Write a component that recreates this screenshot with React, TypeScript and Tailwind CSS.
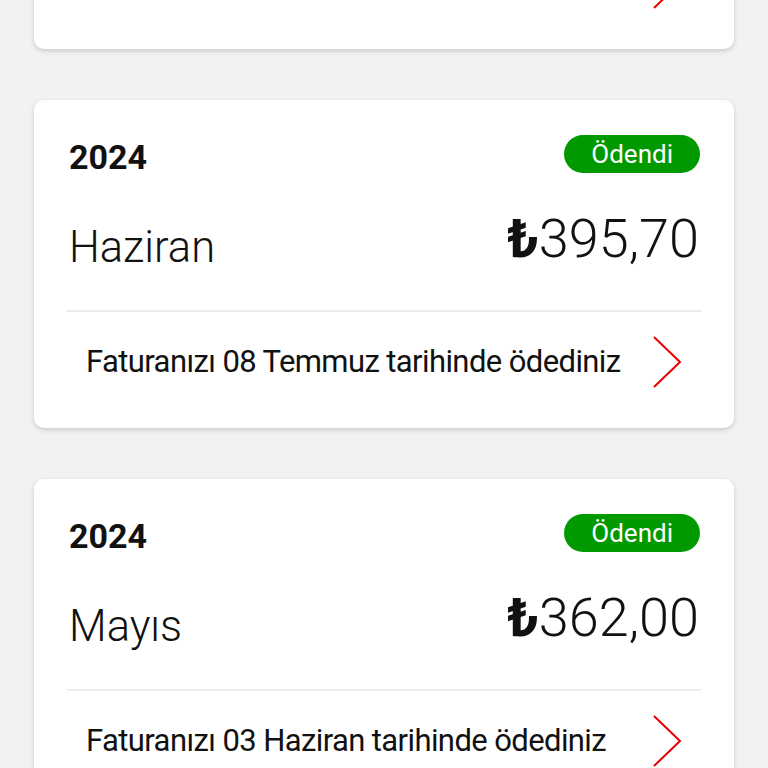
import React from "react";

type Bill = { year: string; month: string; amount: string; note: string };

const bills: Bill[] = [
  { year: "2024", month: "Temmuz", amount: "410,20", note: "Faturanızı 05 Ekim tarihinde ödediniz" },
  { year: "2024", month: "Haziran", amount: "395,70", note: "Faturanızı 08 Temmuz tarihinde ödediniz" },
  { year: "2024", month: "Mayıs", amount: "362,00", note: "Faturanızı 03 Haziran tarihinde ödediniz" },
];

function Chevron() {
  return (
    <svg width="30" height="52" viewBox="0 0 30 52" fill="none">
      <path d="M2 1 L28 26 L2 51" stroke="#e60000" strokeWidth="2" strokeLinejoin="miter" />
    </svg>
  );
}

function Card({ bill }: { bill: Bill }) {
  return (
    <div className="bg-white rounded-[10px] shadow-[0_2px_5px_rgba(0,0,0,0.16)] h-[328px] flex flex-col shrink-0">
      <div className="px-[35px] pt-[35px] flex justify-between items-center h-[73px]">
        <span className="text-[34px] font-bold leading-none text-[#111] mt-[6px]">{bill.year}</span>
        <span className="h-[38px] px-[27px] rounded-full bg-[#009a00] text-white text-[26px] leading-[38px] mr-[-1px]">
          Ödendi
        </span>
      </div>
      <div className="px-[35px] flex justify-between items-end h-[137px] pb-[41px]">
        <span className="text-[43.5px] font-light leading-none text-[#111]">{bill.month}</span>
        <span className="text-[54px] leading-none text-[#111] mb-[3px]">
          <span className="font-bold">₺</span>
          <span className="font-light">{bill.amount}</span>
        </span>
      </div>
      <div className="mx-[33px] h-[2px] bg-[#ececec]" />
      <div className="flex-1 flex items-center justify-between pl-[52px] pr-[52px] pb-[16px]">
        <span className="text-[31px] text-[#111] tracking-[-0.6px]">{bill.note}</span>
        <Chevron />
      </div>
    </div>
  );
}

export default function App() {
  return (
    <div className="h-[768px] overflow-hidden bg-[#f2f2f2]" style={{ fontFamily: "Roboto, 'DejaVu Sans', sans-serif" }}>
      <div className="flex flex-col gap-[51px] px-[34px] mt-[-279px]">
        {bills.map((b, i) => (
          <Card key={i} bill={b} />
        ))}
      </div>
    </div>
  );
}
